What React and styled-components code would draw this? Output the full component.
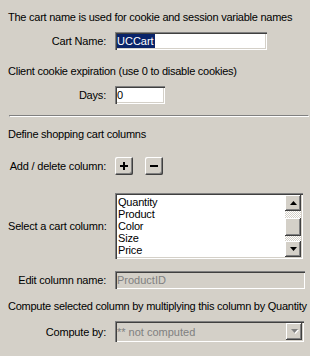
import React from "react";
import styled, { createGlobalStyle } from "styled-components";

const Global = createGlobalStyle`
  html, body { margin: 0; padding: 0; background: #d4d0c8; }
  body { font-family: "Liberation Sans", Arial, sans-serif; font-size: 11px; color: #000; }
  * { box-sizing: border-box; }
`;

const sunken = `
  box-shadow: inset 1px 1px #808080, inset 2px 2px #404040,
    inset -1px -1px #ffffff, inset -2px -2px #d4d0c8;
`;
const raised = `
  box-shadow: inset -1px -1px #404040, inset 1px 1px #ffffff,
    inset -2px -2px #808080, inset 2px 2px #d4d0c8;
`;

const Panel = styled.div`
  width: 310px;
  height: 356px;
  padding: 10px 0 0 8px;
  display: flex;
  flex-direction: column;
  background: #d4d0c8;
  overflow: hidden;
`;

const Note = styled.div`
  height: 14px;
  line-height: 14px;
  white-space: nowrap;
  letter-spacing: -0.25px;
  margin-top: ${(p) => p.$mt || 0}px;
`;

const Row = styled.div`
  display: flex;
  align-items: center;
  margin-top: ${(p) => p.$mt}px;
`;

const Label = styled.div`
  flex: none;
  width: 98px;
  margin-right: 9px;
  text-align: right;
  white-space: nowrap;
  letter-spacing: -0.2px;
  line-height: 14px;
`;

const Field = styled.div`
  flex: none;
  width: ${(p) => p.$w}px;
  height: ${(p) => p.$h || 18}px;
  background: ${(p) => (p.$disabled ? "#d4d0c8" : "#ffffff")};
  color: ${(p) => (p.$disabled ? "#808080" : "#000")};
  ${sunken}
  padding: 0 2px;
  display: flex;
  align-items: center;
  line-height: 14px;
  white-space: nowrap;
  overflow: hidden;
  position: relative;
`;

const Selected = styled.span`
  display: inline-block;
  background: #0a246a;
  color: #fff;
  line-height: 14px;
  padding-right: 1px;
`;

const Separator = styled.div`
  margin-top: ${(p) => p.$mt}px;
  margin-left: 1px;
  width: 300px;
  height: 2px;
  border-top: 1px solid #808080;
  border-left: 1px solid #808080;
  border-bottom: 1px solid #ffffff;
  border-right: 1px solid #ffffff;
`;

const IconButton = styled.div`
  flex: none;
  width: 18px;
  height: 18px;
  margin-left: ${(p) => p.$ml || 0}px;
  background: #d4d0c8;
  border-radius: 2px;
  ${raised}
  display: flex;
  align-items: center;
  justify-content: center;
`;

const ListBox = styled.div`
  flex: none;
  width: 188px;
  height: 66px;
  background: #fff;
  ${sunken}
  padding: 2px;
  display: flex;
`;

const Items = styled.div`
  flex: 1;
  padding: 1px 0 0 1px;
  overflow: hidden;
`;

const Item = styled.div`
  height: 12px;
  line-height: 12px;
  letter-spacing: -0.2px;
`;

const ScrollBar = styled.div`
  flex: none;
  width: 16px;
  display: flex;
  flex-direction: column;
`;

const ScrollButton = styled.div`
  flex: none;
  width: 16px;
  height: 16px;
  background: #d4d0c8;
  ${raised}
  display: flex;
  align-items: center;
  justify-content: center;
`;

const Track = styled.div`
  flex: ${(p) => (p.$h ? "none" : "1")};
  height: ${(p) => (p.$h ? `${p.$h}px` : "auto")};
  background-color: #d4d0c8;
  background-image: conic-gradient(#ffffff 25%, #d4d0c8 0 50%, #ffffff 0 75%, #d4d0c8 0);
  background-size: 2px 2px;
`;

const Thumb = styled.div`
  flex: none;
  height: 18px;
  background: #d4d0c8;
  ${raised}
`;

const DropButton = styled(ScrollButton)`
  position: absolute;
  right: 2px;
  top: 2px;
  height: ${(p) => p.$h}px;
`;

const Arrow = ({ dir = "down", color = "#000", shadow }) => (
  <svg width="7" height="5" viewBox="0 0 7 5" style={{ overflow: "visible" }}>
    {shadow && (
      <polygon
        points={dir === "up" ? "4.5,1 8,5 1,5" : "1,1 8,1 4.5,5"}
        fill={shadow}
      />
    )}
    <polygon points={dir === "up" ? "3.5,0 7,4 0,4" : "0,0 7,0 3.5,4"} fill={color} />
  </svg>
);

const PlusIcon = () => (
  <svg width="8" height="8" viewBox="0 0 8 8">
    <rect x="3" y="0" width="2" height="8" fill="#000" />
    <rect x="0" y="3" width="8" height="2" fill="#000" />
  </svg>
);

const MinusIcon = () => (
  <svg width="8" height="8" viewBox="0 0 8 8">
    <rect x="0" y="3" width="8" height="2" fill="#000" />
  </svg>
);

const columns = ["Quantity", "Product", "Color", "Size", "Price"];

export default function App() {
  return (
    <>
      <Global />
      <Panel>
        <Note>The cart name is used for cookie and session variable names</Note>
        <Row $mt={8}>
          <Label>Cart Name:</Label>
          <Field $w={152}>
            <Selected>UCCart</Selected>
          </Field>
        </Row>
        <Note $mt={14}>Client cookie expiration (use 0 to disable cookies)</Note>
        <Row $mt={8}>
          <Label>Days:</Label>
          <Field $w={50}>0</Field>
        </Row>
        <Separator $mt={11} />
        <Note $mt={10}>Define shopping cart columns</Note>
        <Row $mt={16}>
          <Label>Add / delete column:</Label>
          <IconButton>
            <PlusIcon />
          </IconButton>
          <IconButton $ml={12}>
            <MinusIcon />
          </IconButton>
        </Row>
        <Row $mt={18}>
          <Label>Select a cart column:</Label>
          <ListBox>
            <Items>
              {columns.map((c) => (
                <Item key={c}>{c}</Item>
              ))}
            </Items>
            <ScrollBar>
              <ScrollButton>
                <Arrow dir="up" />
              </ScrollButton>
              <Track $h={7} />
              <Thumb />
              <Track />
              <ScrollButton>
                <Arrow dir="down" />
              </ScrollButton>
            </ScrollBar>
          </ListBox>
        </Row>
        <Row $mt={12}>
          <Label>Edit column name:</Label>
          <Field $w={190} $disabled>
            ProductID
          </Field>
        </Row>
        <Note $mt={10}>Compute selected column by multiplying this column by Quantity</Note>
        <Row $mt={8}>
          <Label>Compute by:</Label>
          <Field $w={189} $h={21} $disabled>
            ** not computed
            <DropButton $h={17}>
              <Arrow dir="down" color="#808080" shadow="#ffffff" />
            </DropButton>
          </Field>
        </Row>
      </Panel>
    </>
  );
}
